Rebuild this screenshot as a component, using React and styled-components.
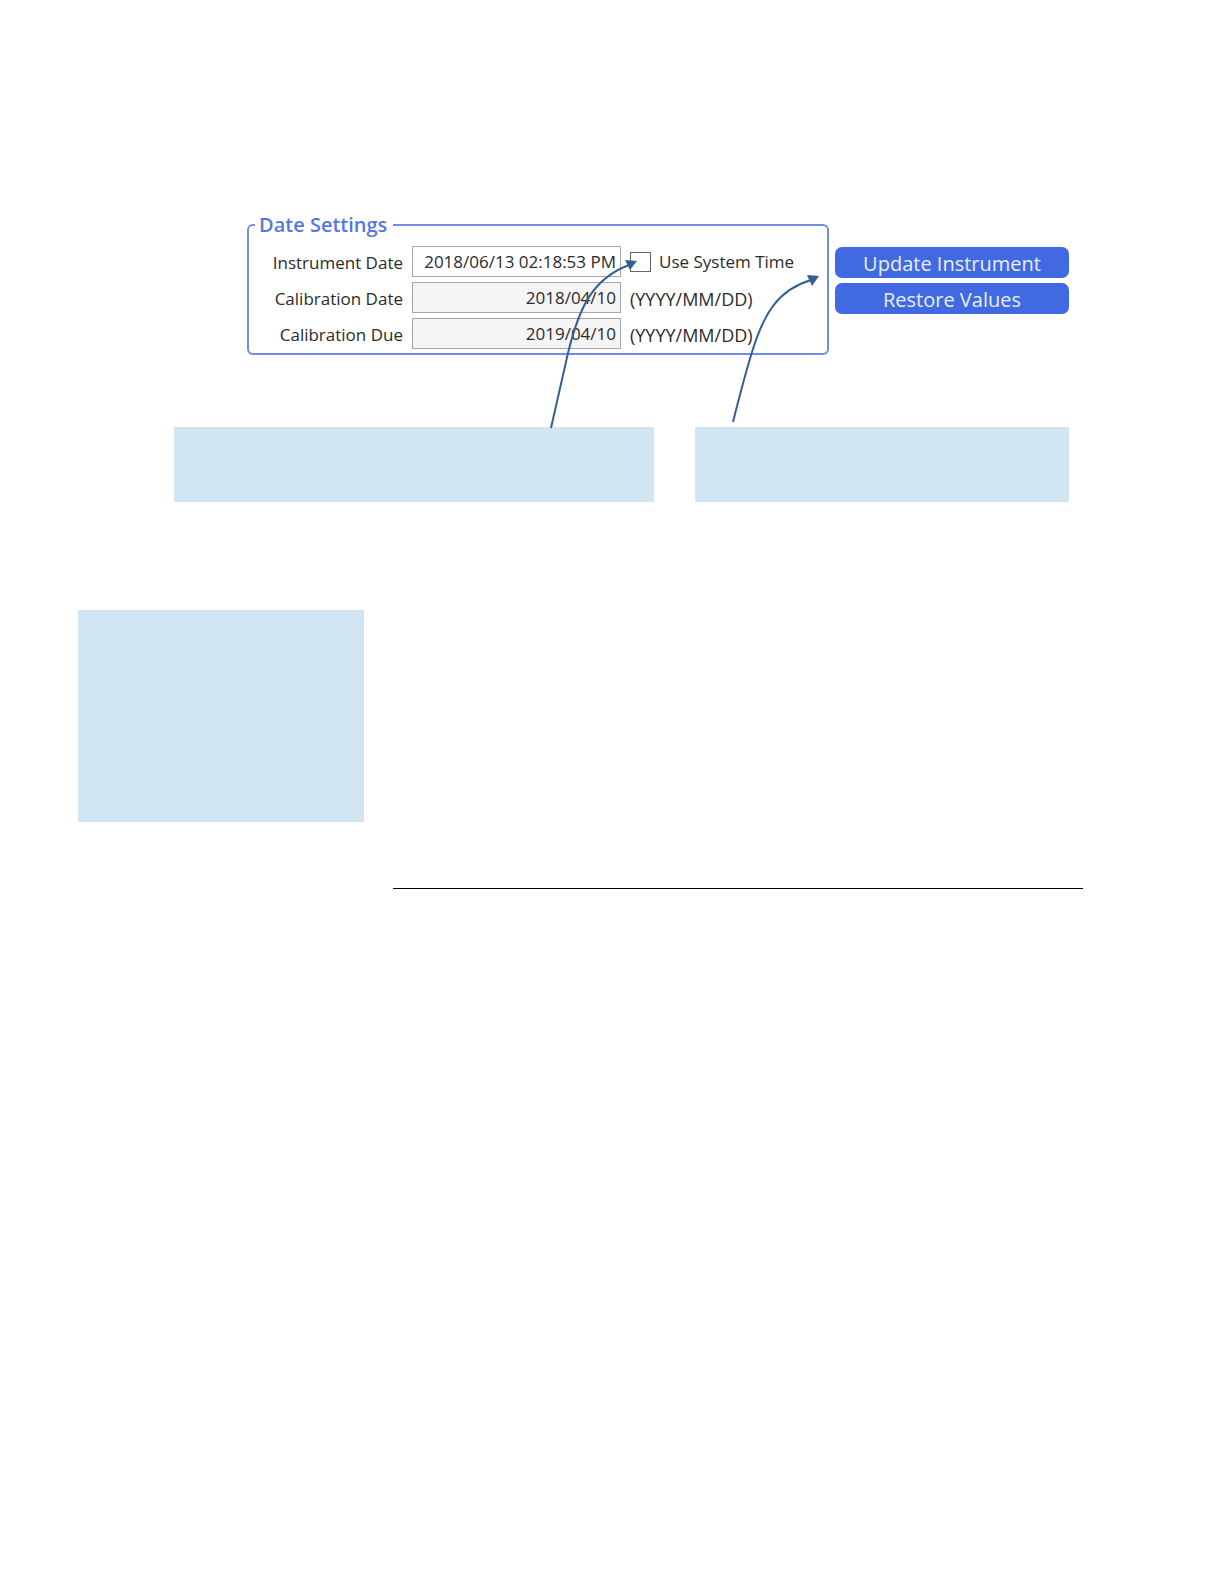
import React, { useState } from "react";
import styled, { createGlobalStyle } from "styled-components";

const GlobalStyle = createGlobalStyle`
  *, *::before, *::after {
    box-sizing: border-box;
  }
  body {
    margin: 0;
    background: #fff;
    color: #2b2b2b;
    font-family: "Open Sans", "Noto Sans", sans-serif;
    font-size: 17px;
    line-height: 24px;
  }
`;

const Page = styled.main`
  padding: 210px 141px 80px 78px;
`;

const Figure = styled.section`
  position: relative;
  max-width: 991px;
  padding-left: 96px;
`;

const Panel = styled.div`
  display: flex;
  gap: 6px;
  padding-left: 73px;
`;

const Group = styled.fieldset`
  flex: 1;
  min-width: 0;
  margin: 0;
  padding: 6px 0 4px;
  border: 2px solid #6f8ce6;
  border-radius: 6px;
`;

const Legend = styled.legend`
  margin-left: 6px;
  padding: 0 6px 0 4px;
  color: #5577e0;
  font-size: 20px;
  font-weight: 600;
  line-height: 30px;
`;

const Rows = styled.div`
  display: grid;
  grid-template-columns: 154px 209px 1fr;
  column-gap: 9px;
  row-gap: 5px;
  align-items: center;
`;

const Label = styled.label`
  padding-top: 2px;
  text-align: right;
`;

const Format = styled.span`
  padding-top: 2px;
  font-size: 18px;
`;

const DateInput = styled.input`
  width: 100%;
  height: 31px;
  padding: 0 4px;
  border: 1px solid #a6a6a6;
  border-radius: 0;
  background: ${props => (props.readOnly ? "#f5f5f5" : "#fff")};
  color: inherit;
  font: inherit;
  text-align: right;
`;

const Check = styled.label`
  display: flex;
  align-items: center;
  gap: 8px;
`;

const CheckBox = styled.input`
  appearance: none;
  width: 21px;
  height: 20px;
  margin: 0;
  border: 1px solid #666;
  background: #fff;

  &:checked {
    background: #4169e1;
  }
`;

const Actions = styled.div`
  display: flex;
  flex-direction: column;
  gap: 5px;
  width: 234px;
  padding-top: 37px;
`;

const Button = styled.button`
  height: 31px;
  padding: 2px 0 0;
  border: 0;
  border-radius: 7px;
  background: #4169e1;
  color: #e9eefc;
  font: inherit;
  font-size: 20px;
`;

const Notes = styled.div`
  display: grid;
  grid-template-columns: 480fr 374fr;
  gap: 41px;
  margin-top: 72px;
`;

const Note = styled.div`
  min-height: ${props => props.$height}px;
  background: #d1e5f2;
`;

const Arrows = styled.svg`
  position: absolute;
  top: 0;
  left: 96px;
  pointer-events: none;
`;

const Lower = styled.section`
  display: grid;
  grid-template-columns: 286px 1fr;
  align-items: start;
  column-gap: 29px;
  margin-top: 108px;
`;

const Rule = styled.hr`
  width: 100%;
  margin: 278px 0 0;
  border: 0;
  border-top: 1px solid #000;
`;

const App = () => {
  const [instrumentDate, setInstrumentDate] = useState("2018/06/13 02:18:53 PM");
  const [systemTime, setSystemTime] = useState(false);

  return (
    <Page>
      <GlobalStyle />
      <Figure>
        <Panel>
          <Group>
            <Legend>Date Settings</Legend>
            <Rows>
              <Label htmlFor="instrument-date">Instrument Date</Label>
              <DateInput
                id="instrument-date"
                value={instrumentDate}
                onChange={e => setInstrumentDate(e.target.value)}
              />
              <Check>
                <CheckBox
                  type="checkbox"
                  checked={systemTime}
                  onChange={e => setSystemTime(e.target.checked)}
                />
                Use System Time
              </Check>
              <Label htmlFor="calibration-date">Calibration Date</Label>
              <DateInput id="calibration-date" value="2018/04/10" readOnly />
              <Format>(YYYY/MM/DD)</Format>
              <Label htmlFor="calibration-due">Calibration Due</Label>
              <DateInput id="calibration-due" value="2019/04/10" readOnly />
              <Format>(YYYY/MM/DD)</Format>
            </Rows>
          </Group>
          <Actions>
            <Button type="button">Update Instrument</Button>
            <Button type="button">Restore Values</Button>
          </Actions>
        </Panel>
        <Notes>
          <Note $height={75} />
          <Note $height={75} />
        </Notes>
        <Arrows width="660" height="220" fill="none" aria-hidden="true">
          <g stroke="#365f91" strokeWidth="2">
            <path d="M377 218 L394 143 C405 98 418 69 455 55" />
            <path d="M559 212 C567 180 571 165 578 142 C590 103 604 80 637 70" />
          </g>
          <g fill="#365f91">
            <path d="M463 51 L451 50 L456 60 Z" />
            <path d="M645 66 L633 65 L638 76 Z" />
          </g>
        </Arrows>
      </Figure>
      <Lower>
        <Note $height={212} />
        <Rule />
      </Lower>
    </Page>
  );
};

export default App;
